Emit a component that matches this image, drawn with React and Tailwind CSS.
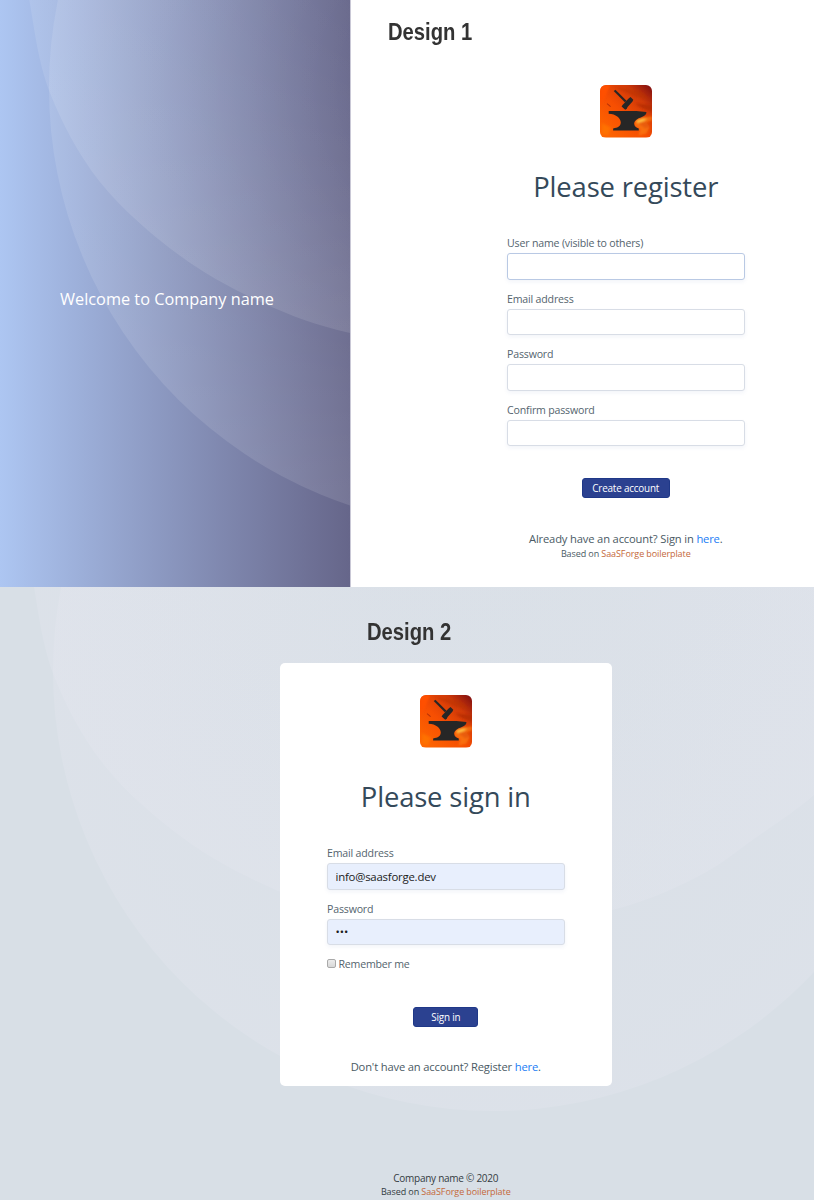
import React from "react";

// Lower edge of the flattened disc, listed from the top left to the right.
const DISC_POINTS = [
  [31, -40], [34, 0], [54, 89], [104, 178], [183, 251], [267, 299], [354, 329],
  [474, 346], [612, 323], [697, 290], [754, 252], [814, 208], [860, 160],
];

function smoothPath(pts) {
  let d = `M${pts[0][0]} ${pts[0][1]}`;
  for (let i = 0; i < pts.length - 1; i++) {
    const p0 = pts[i - 1] || pts[i];
    const p1 = pts[i];
    const p2 = pts[i + 1];
    const p3 = pts[i + 2] || p2;
    d += ` C${p1[0] + (p2[0] - p0[0]) / 6} ${p1[1] + (p2[1] - p0[1]) / 6} ${p2[0] - (p3[0] - p1[0]) / 6} ${p2[1] - (p3[1] - p1[1]) / 6} ${p2[0]} ${p2[1]}`;
  }
  return d + " V-40Z";
}

const DISC = smoothPath(DISC_POINTS);

function Backdrop({ id, dx, dy, color, inner, outer }) {
  return (
    <svg className="absolute inset-0 h-full w-full" aria-hidden="true">
      <defs>
        <radialGradient id={id + "a"} gradientUnits="userSpaceOnUse" cx="470" cy="-120" r="480">
          <stop offset="0.3" stopColor={color} stopOpacity={inner} />
          <stop offset="1" stopColor={color} stopOpacity={outer} />
        </radialGradient>
        <radialGradient id={id + "b"} gradientUnits="userSpaceOnUse" cx="493" cy="84" r="440">
          <stop offset="0.3" stopColor={color} stopOpacity={inner} />
          <stop offset="1" stopColor={color} stopOpacity={outer} />
        </radialGradient>
      </defs>
      <g transform={`translate(${dx} ${dy})`}>
        <circle cx="493" cy="84" r="440" fill={`url(#${id}b)`} />
        <path d={DISC} fill={`url(#${id}a)`} />
      </g>
    </svg>
  );
}

function Logo({ id }) {
  return (
    <svg viewBox="0 0 52 52" className="block h-[52.5px] w-[52.5px] rounded-[6px]">
      <defs>
        <linearGradient id={id + "f"} x1="0" y1="1" x2="1" y2="0">
          <stop offset="0" stopColor="#ff6a00" />
          <stop offset="0.45" stopColor="#f64e02" />
          <stop offset="0.75" stopColor="#cf3a08" />
          <stop offset="1" stopColor="#780a12" />
        </linearGradient>
        <filter id={id + "s"} x="-30%" y="-30%" width="160%" height="160%">
          <feGaussianBlur stdDeviation="0.9" />
        </filter>
      </defs>
      <rect width="52" height="52" fill={`url(#${id}f)`} />
      <g filter={`url(#${id}s)`}>
        <path d="M0 0H10L5 12L0 22Z" fill="#ff5000" />
        <path d="M14 2L40 6L50 14L36 12Z" fill="#b83008" opacity="0.5" />
        <path d="M34 18L52 20V27L42 23Z" fill="#a82408" opacity="0.6" />
        <path d="M35 35L44 32L52 31V35L46 37L49 42L46 48L38 50L40 44L34 40Z" fill="#fb7a10" opacity="0.75" />
        <path d="M36 35L42 33L47 33.5L43 36L37 38Z" fill="#ffc040" />
        <path d="M38 38L46 36L49 41L45 43Z" fill="#e85c08" />
        <path d="M2 38L11 42L8 50L2 48Z" fill="#ff7a0a" opacity="0.6" />
      </g>
      <path d="M7 18.5L10.5 21.5" stroke="#b43008" strokeWidth="1" />
      <g fill="#262626">
        <path d="M13.6 6L15.3 4.7L26.3 15.6L24.6 17.2Z" />
        <path d="M30.2 11.8L33 14.5L32.2 16.3L27.3 21.7L26.6 23.4L25 24.4L21.4 21.3L22.3 19.7L23.3 18.8L28.1 13.5Z" />
        <path d="M8.6 25.7H36L46 26.7C46 29.3 44.4 30.5 41.5 31.6C36.5 33.2 33.8 35.6 33.8 38.5C34.1 41.2 35.7 42.4 38.4 43V45H13V43C17.8 42.5 20.6 40.7 20.6 37C20.3 32.6 15.8 28.7 8.6 28.4Z" />
      </g>
    </svg>
  );
}

function Field({ label, type = "text", value = "", focused, filled }) {
  return (
    <label className="flex h-[55.5px] flex-col">
      <span className="h-4 text-[10.6px] leading-4 tracking-[-0.18px] text-[#54646e]">{label}</span>
      <input
        type={type}
        defaultValue={value}
        className={
          "mt-[2px] h-[26.5px] w-full rounded-[3px] border px-[7.5px] text-[11.4px] text-[#1c1c1c] shadow-[0_2px_4px_rgba(40,70,160,0.06)] outline-none " +
          (type === "password" ? "" : "tracking-[-0.22px] ") +
          (focused ? "border-[#b9c9e4] " : "border-[#d8dde6] ") +
          (filled ? "bg-[#e8effd]" : "bg-white")
        }
      />
    </label>
  );
}

function Heading({ children }) {
  return (
    <h1 className="mt-[29px] mb-[28.5px] text-center text-[27.4px] leading-10 font-normal tracking-[-0.16px] whitespace-nowrap text-[#34495a]">
      {children}
    </h1>
  );
}

function Submit({ children, className }) {
  return (
    <button
      type="button"
      className={"block h-5 rounded-[3px] border border-[#1f3888] bg-[#2b4190] pt-[2px] text-[9.9px] leading-none tracking-[-0.18px] text-white " + className}
    >
      {children}
    </button>
  );
}

function Based() {
  return (
    <>
      Based on <a className="text-[#c4683a]">SaaSForge boilerplate</a>
    </>
  );
}

function Caption({ children }) {
  return (
    <div className="origin-left scale-x-[0.825] font-['Liberation_Sans',sans-serif] text-[24.5px] leading-8 font-bold whitespace-nowrap text-[#333]">
      {children}
    </div>
  );
}

function RegisterPage() {
  return (
    <section className="flex h-[587px]">
      <aside className="relative w-[351px] overflow-hidden border-r border-[#c9c8d6] bg-linear-to-r from-[#adc6f2] to-[#66668a]">
        <Backdrop id="reg" dx={-4} dy={4} color="#ffffff" inner={0.01} outer={0.11} />
        <p className="relative pt-[287px] pl-[60px] text-[16.3px] leading-6 text-white">Welcome to Company name</p>
      </aside>
      <main className="flex-1 bg-white pl-[37px]">
        <div className="h-[85px] pt-4">
          <Caption>Design 1</Caption>
        </div>
        <form className="ml-[119px] flex w-[237.5px] flex-col items-center">
          <Logo id="l1" />
          <Heading>Please register</Heading>
          <div className="w-full">
            <Field label="User name (visible to others)" focused />
            <Field label="Email address" type="email" />
            <Field label="Password" type="password" />
            <Field label="Confirm password" type="password" />
          </div>
          <Submit className="mt-[21px] w-[88px]">Create account</Submit>
          <p className="mt-8 text-[11.2px] leading-[18px] tracking-[-0.16px] whitespace-nowrap text-[#4a5a64]">
            Already have an account? Sign in <a className="text-[#1a7cf5]">here</a>.
          </p>
          <p className="text-[9px] leading-[11px] tracking-[-0.09px] whitespace-nowrap text-[#4a5a64]">
            <Based />
          </p>
        </form>
      </main>
    </section>
  );
}

function SignInPage() {
  return (
    <section className="relative h-[613px] overflow-hidden bg-[#d8dfe6]">
      <Backdrop id="sig" dx={0} dy={0} color="#e6e7f0" inner={0.1} outer={0.3} />
      <div className="relative flex flex-col">
        <div className="h-[76px] pt-[29px] pl-[367px]">
          <Caption>Design 2</Caption>
        </div>
        <form className="ml-[280px] flex h-[423px] w-[331.5px] flex-col items-center rounded-[5px] bg-white px-[47px] pt-8">
          <Logo id="l2" />
          <Heading>Please sign in</Heading>
          <div className="w-full">
            <Field label="Email address" type="email" value="info@saasforge.dev" filled />
            <Field label="Password" type="password" value="abc" filled />
            <label className="flex h-4 items-center gap-[2.5px] text-[10.6px] tracking-[-0.2px] text-[#54646e]">
              <input
                type="checkbox"
                className="mb-px h-[9px] w-[9px] appearance-none rounded-[2px] border border-[#a9a9a9] bg-linear-to-b from-[#ececec] to-[#d8d8d8]"
              />
              <span className="pt-px">Remember me</span>
            </label>
          </div>
          <Submit className="mt-[35px] w-[65px]">Sign in</Submit>
          <p className="mt-[31px] text-[11.2px] leading-[18px] tracking-[-0.16px] whitespace-nowrap text-[#4a5a64]">
            Don't have an account? Register <a className="text-[#1a7cf5]">here</a>.
          </p>
        </form>
        <footer className="ml-[280px] flex w-[331.5px] flex-col items-center pt-[85px] text-[#343c42]">
          <p className="text-[10px] leading-[14px] tracking-[-0.26px]">Company name © 2020</p>
          <p className="text-[9px] leading-[13px] tracking-[-0.09px]">
            <Based />
          </p>
        </footer>
      </div>
    </section>
  );
}

export default function App() {
  return (
    <div className="h-[1200px] w-[814px] overflow-hidden font-['Open_Sans',sans-serif]">
      <RegisterPage />
      <SignInPage />
    </div>
  );
}
